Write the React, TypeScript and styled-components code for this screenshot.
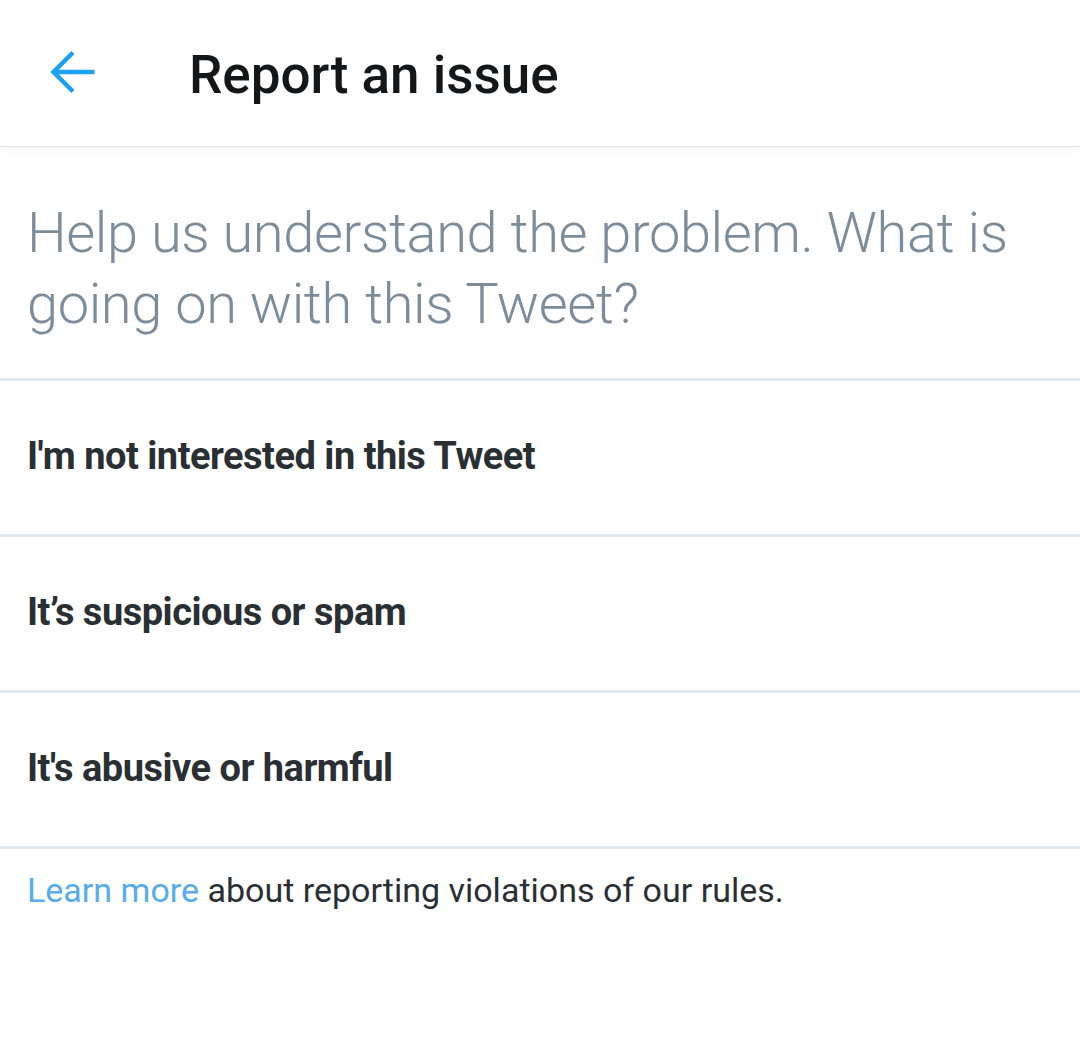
import styled, { createGlobalStyle } from 'styled-components';

const GlobalStyle = createGlobalStyle`
  html, body {
    margin: 0;
    padding: 0;
    background: #fff;
    font-family: Roboto, "Noto Sans", "Liberation Sans", sans-serif;
  }
`;

const Page = styled.div`
  width: 1080px;
  min-height: 1041px;
  background: #fff;
`;

const Header = styled.header`
  height: 146px;
  display: flex;
  align-items: center;
  padding-left: 50px;
  box-shadow: 0 1px 0 #e4e6e8, 0 3px 8px rgba(0, 0, 0, 0.06);
  position: relative;
`;

const BackButton = styled.button`
  width: 48px;
  height: 48px;
  padding: 0;
  margin: 0 91px 0 0;
  border: none;
  background: none;
  display: flex;
  cursor: pointer;
`;

const Title = styled.h1`
  margin: 4px 0 0;
  font-size: 53px;
  font-weight: 500;
  color: #14171a;
`;

const Prompt = styled.p`
  margin: 0;
  padding: 52px 27px 38px;
  font-size: 56px;
  font-weight: 300;
  line-height: 71px;
  letter-spacing: -0.4px;
  color: #7d8c9a;
  border-bottom: 3px solid #e1e8ed;
`;

const OptionList = styled.ul`
  list-style: none;
  margin: 0;
  padding: 0;
`;

const Option = styled.li`
  box-sizing: border-box;
  height: 156px;
  display: flex;
  align-items: center;
  padding: 0 27px 4px;
  font-size: 38px;
  font-weight: 700;
  letter-spacing: -0.5px;
  color: #292f33;
  border-bottom: 3px solid #e1e8ed;
  cursor: pointer;
`;

const Footer = styled.p`
  margin: 0;
  padding: 21px 27px;
  font-size: 34px;
  font-weight: 400;
  color: #292f33;
`;

const Link = styled.a`
  color: #55acee;
  text-decoration: none;
`;

const options = [
  "I'm not interested in this Tweet",
  'It\u2019s suspicious or spam',
  "It's abusive or harmful",
];

function BackArrow() {
  return (
    <svg width="48" height="48" viewBox="0 0 48 48" fill="none">
      <path
        d="M23 3.5 L3.5 23 L23 42.5 M3.5 23 H44.5"
        stroke="#1da1f2"
        strokeWidth="4.5"
        strokeLinejoin="miter"
      />
    </svg>
  );
}

export default function App() {
  return (
    <Page>
      <GlobalStyle />
      <Header>
        <BackButton aria-label="Back">
          <BackArrow />
        </BackButton>
        <Title>Report an issue</Title>
      </Header>
      <Prompt>Help us understand the problem. What is going on with this Tweet?</Prompt>
      <OptionList>
        {options.map((o) => (
          <Option key={o}>{o}</Option>
        ))}
      </OptionList>
      <Footer>
        <Link href="#">Learn more</Link> about reporting violations of our rules.
      </Footer>
    </Page>
  );
}
